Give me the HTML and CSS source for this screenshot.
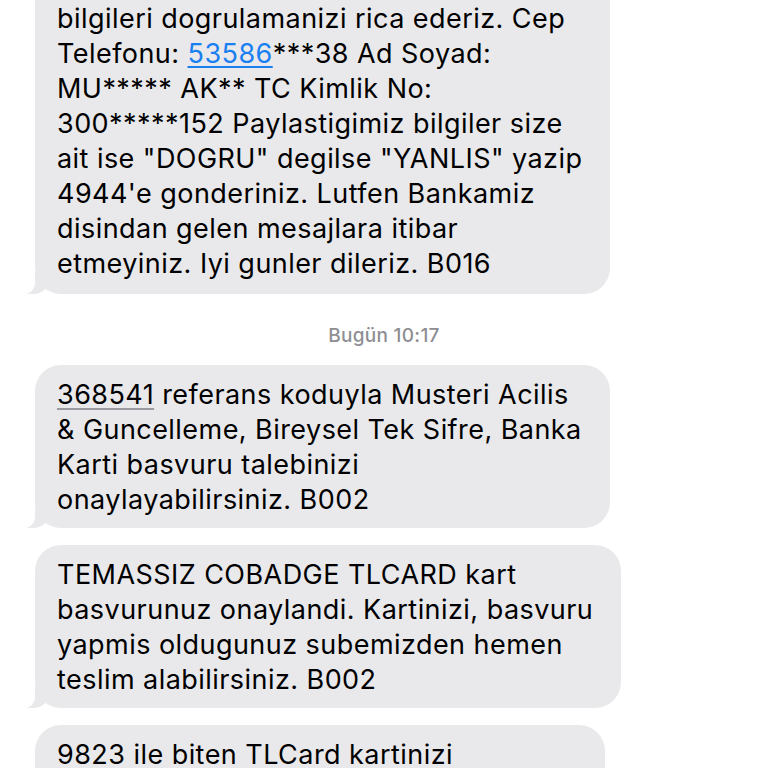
FILE: index.html
```html
<!DOCTYPE html>
<html lang="tr">
<head>
<meta charset="utf-8">
<title>Mesajlar</title>
<link rel="stylesheet" href="styles.css">
</head>
<body>
<main class="thread">
  <div class="bubble bubble-first">Sayin musterimiz, asagida yer alan<br>bilgileri dogrulamanizi rica ederiz. Cep<br>Telefonu: <a class="link" href="#">53586</a>***38 Ad Soyad:<br>MU***** AK** TC Kimlik No:<br>300*****152 Paylastigimiz bilgiler size<br>ait ise "DOGRU" degilse "YANLIS" yazip<br>4944'e gonderiniz. Lutfen Bankamiz<br>disindan gelen mesajlara itibar<br>etmeyiniz. Iyi gunler dileriz. B016</div>

  <div class="timestamp">Bugün 10:17</div>

  <div class="bubble"><span class="detected">368541</span> referans koduyla Musteri Acilis<br>&amp; Guncelleme, Bireysel Tek Sifre, Banka<br>Karti basvuru talebinizi<br>onaylayabilirsiniz. B002</div>

  <div class="bubble">TEMASSIZ COBADGE TLCARD kart<br>basvurunuz onaylandi. Kartinizi, basvuru<br>yapmis oldugunuz subemizden hemen<br>teslim alabilirsiniz. B002</div>

  <div class="bubble">9823 ile biten TLCard kartinizi<br>internet alisverisleri icin acmis oldunuz.<br>Iyi gunlerde kullanmanizi dileriz. B002</div>
</main>
</body>
</html>
```

FILE: styles.css
```css
html, body {
  margin: 0;
  padding: 0;
  background: #ffffff;
}

body {
  width: 768px;
  height: 768px;
  overflow: hidden;
  font-family: Inter, "Noto Sans", "Liberation Sans", sans-serif;
  -webkit-font-smoothing: antialiased;
}

.thread {
  display: flex;
  flex-direction: column;
  align-items: flex-start;
  padding-left: 35px;
  gap: 17px;
}

.bubble {
  position: relative;
  box-sizing: border-box;
  background: #e9e9eb;
  color: #000000;
  font-size: 27px;
  line-height: 35px;
  letter-spacing: 0.45px;
  white-space: nowrap;
  padding: 12px 28px 11px 22px;
  border-radius: 26px;
}

.bubble::before {
  content: "";
  position: absolute;
  bottom: 0;
  left: -8px;
  width: 24px;
  height: 22px;
  background: #e9e9eb;
  border-bottom-right-radius: 18px;
}

.bubble::after {
  content: "";
  position: absolute;
  bottom: 0;
  left: -12px;
  width: 12px;
  height: 22px;
  background: #ffffff;
  border-bottom-right-radius: 11px;
}

.bubble-first {
  margin-top: -46px;
  padding-bottom: 13px;
}

.link {
  color: #1a7ff0;
  text-decoration: underline;
  text-decoration-thickness: 1.5px;
  text-underline-offset: 3px;
}

.detected {
  text-decoration: underline;
  text-decoration-color: #9a9aa0;
  text-decoration-thickness: 1.5px;
  text-underline-offset: 4px;
}

.timestamp {
  align-self: center;
  margin-left: -35px;
  margin-top: 14px;
  margin-bottom: 1px;
  font-size: 19px;
  line-height: 22px;
  letter-spacing: 0.3px;
  font-weight: 500;
  color: #8e8e93;
}
```
